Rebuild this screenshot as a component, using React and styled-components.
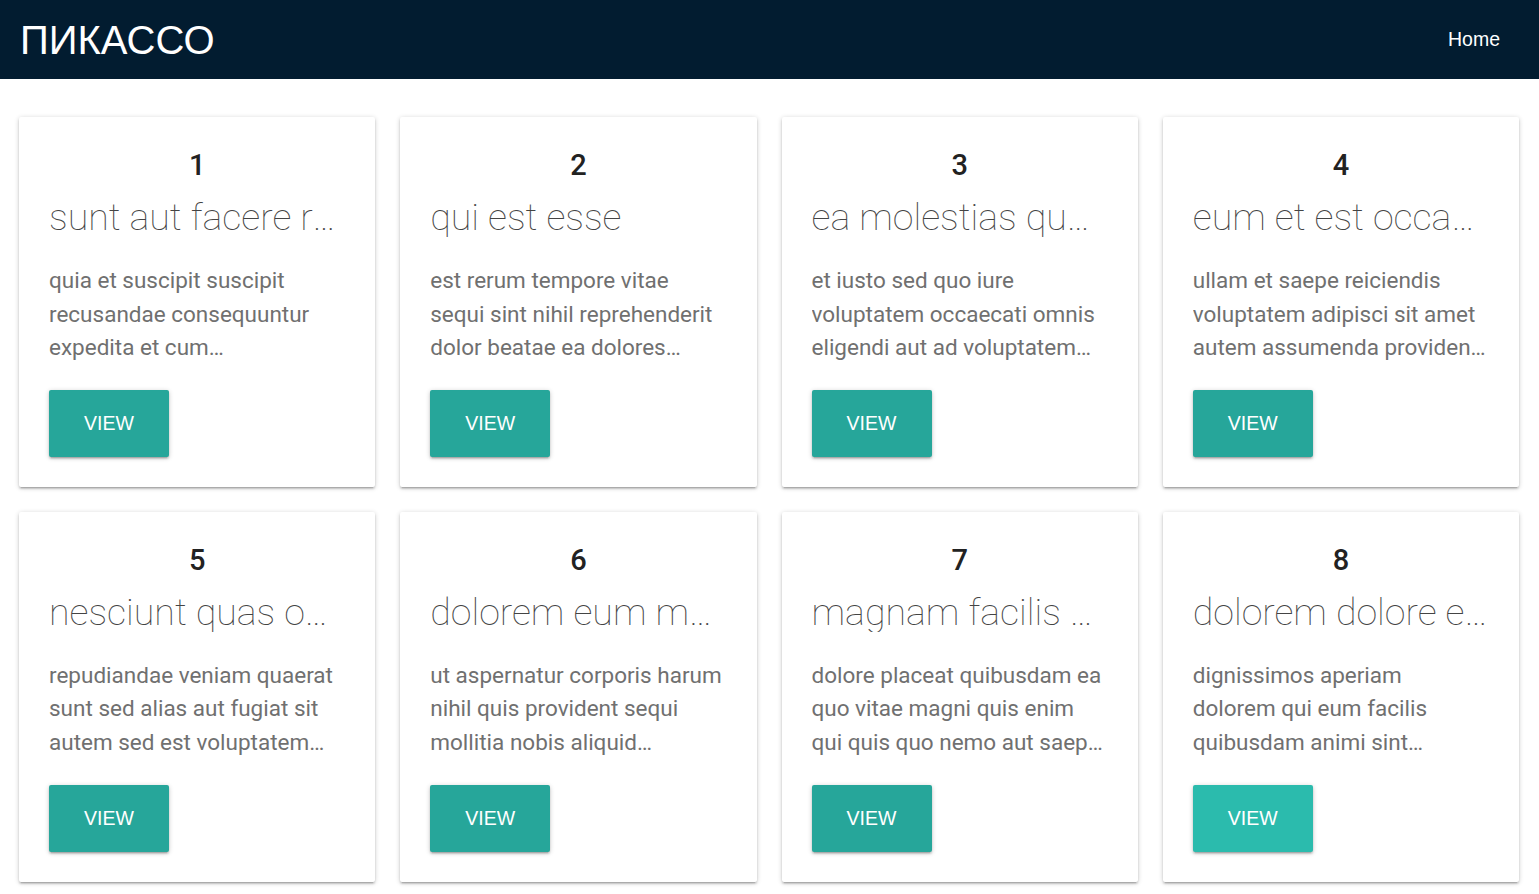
import React from 'react';
import styled, {createGlobalStyle} from "styled-components";

const posts = [
    {
        id: 1,
        title: "sunt aut facere repellat provident occaecati excepturi optio reprehenderit",
        body: "quia et suscipit\nsuscipit recusandae consequuntur expedita et cum\nreprehenderit molestiae ut ut quas totam\nnostrum rerum est autem sunt rem eveniet architecto"
    },
    {
        id: 2,
        title: "qui est esse",
        body: "est rerum tempore vitae\nsequi sint nihil reprehenderit dolor beatae ea dolores neque\nfugiat blanditiis voluptate porro vel nihil molestiae ut reiciendis\nqui aperiam non debitis possimus qui neque nisi nulla"
    },
    {
        id: 3,
        title: "ea molestias quasi exercitationem repellat qui ipsa sit aut",
        body: "et iusto sed quo iure\nvoluptatem occaecati omnis eligendi aut ad\nvoluptatem doloribus vel accusantium quis pariatur\nmolestiae porro eius odio et labore et velit aut"
    },
    {
        id: 4,
        title: "eum et est occaecati",
        body: "ullam et saepe reiciendis voluptatem adipisci\nsit amet autem assumenda provident rerum culpa\nquis hic commodi nesciunt rem tenetur doloremque ipsam iure\nquis sunt voluptatem rerum illo velit"
    },
    {
        id: 5,
        title: "nesciunt quas odio",
        body: "repudiandae veniam quaerat sunt sed\nalias aut fugiat sit autem sed est\nvoluptatem omnis possimus esse voluptatibus quis\nest aut tenetur dolor neque"
    },
    {
        id: 6,
        title: "dolorem eum magni eos aperiam quia",
        body: "ut aspernatur corporis harum nihil quis provident sequi\nmollitia nobis aliquid molestiae\nperspiciatis et ea nemo ab reprehenderit accusantium quas\nvoluptate dolores velit et doloremque molestiae"
    },
    {
        id: 7,
        title: "magnam facilis autem",
        body: "dolore placeat quibusdam ea quo vitae\nmagni quis enim qui quis quo nemo aut saepe\nquidem repellat excepturi ut quia\nsunt ut sequi eos ea sed quas"
    },
    {
        id: 8,
        title: "dolorem dolore est ipsam",
        body: "dignissimos aperiam dolorem qui eum\nfacilis quibusdam animi sint suscipit qui sint possimus cum\nquaerat magni maiores excepturi\nipsam ut commodi dolor voluptatum modi aut vitae"
    },
];

const App = () => {
    return (
        <>
            <GlobalStyle/>
            <Nav>
                <Brand>ПИКАССО</Brand>
                <NavLinks>
                    <li><a href="#">Home</a></li>
                </NavLinks>
            </Nav>
            <Grid>
                {
                    posts.map((post, index) => (
                        <Card key={post.id}>
                            <Number>{post.id}</Number>
                            <Title>{post.title}</Title>
                            <Body>{post.body}</Body>
                            <ViewButton $hover={index === posts.length - 1}>View</ViewButton>
                        </Card>
                    ))
                }
            </Grid>
        </>
    );
};

const GlobalStyle = createGlobalStyle`
  body {
    margin: 0;
    background: #fff;
    font-family: Roboto, "Noto Sans", sans-serif;
  }
`;

const Nav = styled.nav`
  height: 79px;
  background-color: #021c30;
  display: flex;
  align-items: center;
  justify-content: space-between;
  padding: 0 39px 0 20px;
`;

const Brand = styled.a`
  color: #fff;
  font-family: "Liberation Sans", Arial, sans-serif;
  font-size: 40px;
  line-height: 1;
  margin-top: 1px;
`;

const NavLinks = styled.ul`
  list-style: none;
  margin: 0;
  padding: 0;
  display: flex;

  a {
    color: #fff;
    text-decoration: none;
    font-family: "Liberation Sans", Arial, sans-serif;
    font-size: 19.5px;
  }
`;

const Grid = styled.main`
  display: grid;
  grid-template-columns: repeat(4, 1fr);
  gap: 25px;
  padding: 38px 20px 8px 19px;
`;

const Card = styled.div`
  background: #fff;
  border-radius: 2px;
  box-shadow: 0 2px 2px 0 rgba(0, 0, 0, .14), 0 3px 1px -2px rgba(0, 0, 0, .12), 0 1px 5px 0 rgba(0, 0, 0, .2);
  padding: 32px 30px 30px;
  min-width: 0;
`;

const Number = styled.h5`
  margin: 0;
  text-align: center;
  font-size: 29px;
  font-weight: 500;
  line-height: 32px;
  color: #222;
`;

const Title = styled.h4`
  margin: 16px 0 0;
  font-size: 37.5px;
  font-weight: 100;
  line-height: 40px;
  color: #444;
  white-space: nowrap;
  overflow: hidden;
  text-overflow: ellipsis;
`;

const Body = styled.p`
  margin: 27px 0 0;
  font-size: 22.5px;
  line-height: 33.6px;
  color: #707070;
  display: -webkit-box;
  -webkit-line-clamp: 3;
  -webkit-box-orient: vertical;
  overflow: hidden;
`;

const ViewButton = styled.button`
  margin-top: 25px;
  width: 120px;
  height: 67px;
  border: none;
  border-radius: 2px;
  background-color: ${props => props.$hover ? '#2bbbad' : '#26a69a'};
  color: #fff;
  text-transform: uppercase;
  font-family: "Liberation Sans", Arial, sans-serif;
  font-size: 19.5px;
  box-shadow: 0 2px 2px 0 rgba(0, 0, 0, .14), 0 3px 1px -2px rgba(0, 0, 0, .12), 0 1px 5px 0 rgba(0, 0, 0, .2);
  cursor: pointer;
  display: block;
`;

export default App;
